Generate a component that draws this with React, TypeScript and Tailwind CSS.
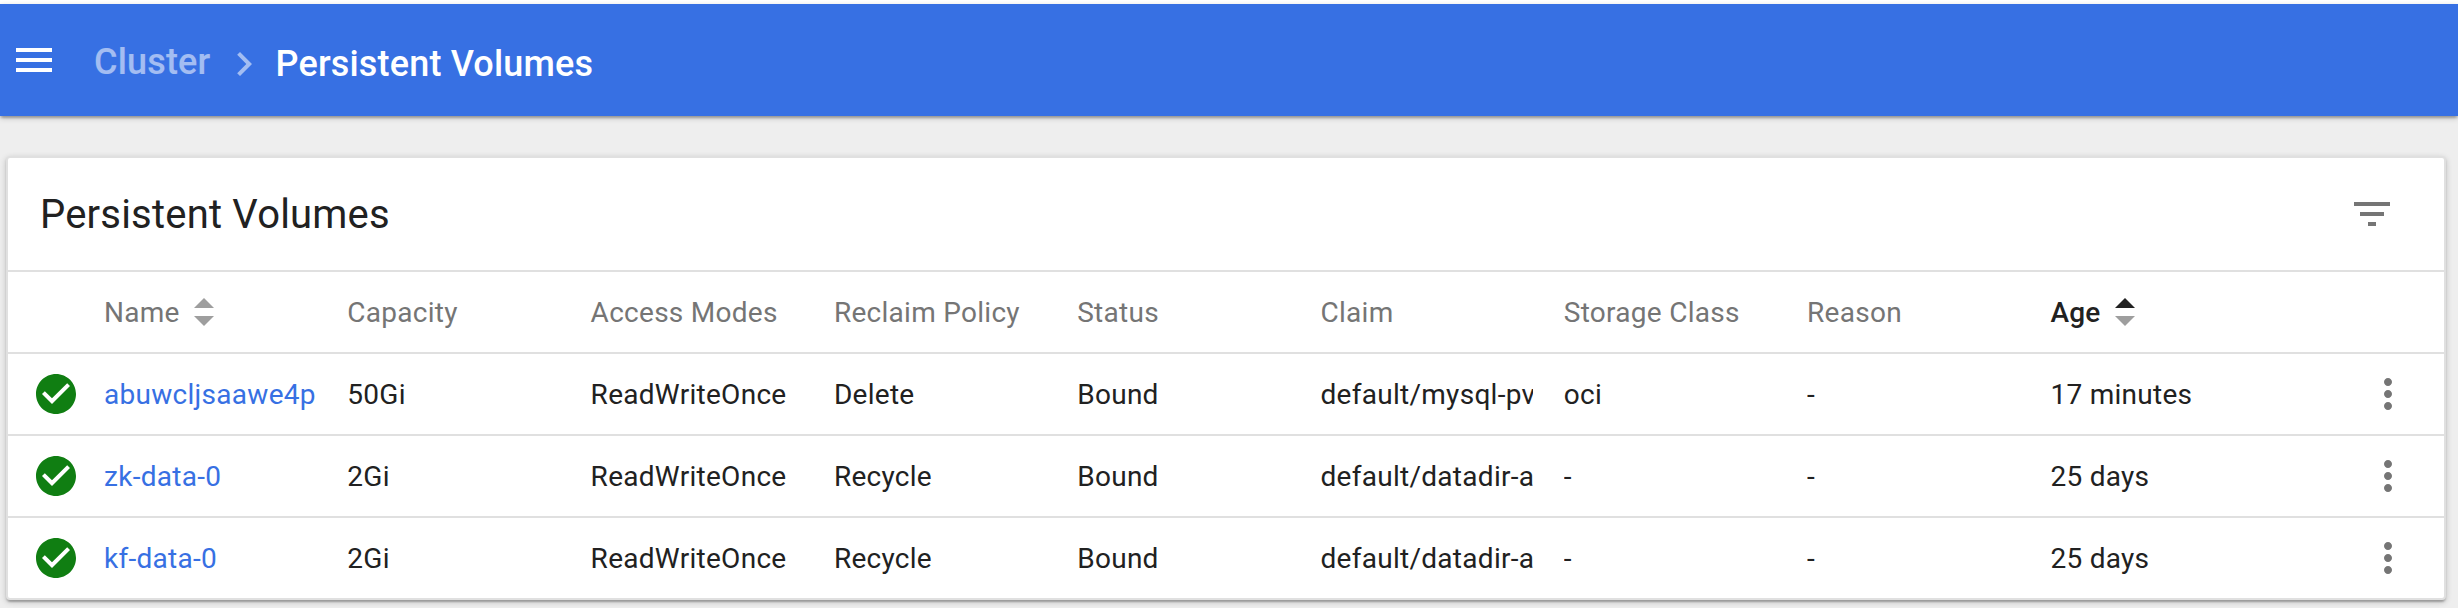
import React from "react";

const COLUMNS = [
  "Name",
  "Capacity",
  "Access Modes",
  "Reclaim Policy",
  "Status",
  "Claim",
  "Storage Class",
  "Reason",
  "Age",
];

const VOLUMES = [
  ["abuwcljsaawe4p", "50Gi", "ReadWriteOnce", "Delete", "Bound", "default/mysql-pv", "oci", "-", "17 minutes"],
  ["zk-data-0", "2Gi", "ReadWriteOnce", "Recycle", "Bound", "default/datadir-a", "-", "-", "25 days"],
  ["kf-data-0", "2Gi", "ReadWriteOnce", "Recycle", "Bound", "default/datadir-a", "-", "-", "25 days"],
];

function Icon({ d, className = "" }: { d: string; className?: string }) {
  return (
    <svg viewBox="0 0 24 24" className={`size-12 shrink-0 fill-current ${className}`}>
      <path d={d} />
    </svg>
  );
}

function SortArrows({ active = false }: { active?: boolean }) {
  return (
    <svg viewBox="0 0 20 28" className="ml-[14px] h-7 w-5 shrink-0">
      <path d="M0 10L10 0l10 10z" fill={active ? "#212121" : "#9e9e9e"} />
      <path d="M0 18l10 10 10-10z" fill="#9e9e9e" />
    </svg>
  );
}

function Toolbar() {
  return (
    <header className="relative flex h-28 items-center bg-[#3770e3] pl-[10px] text-[36px] leading-none font-medium tracking-[0.18px] text-white shadow-[0_2px_6px_rgba(0,0,0,0.2),0_2px_2px_rgba(0,0,0,0.14),0_4px_2px_-2px_rgba(0,0,0,0.12)]">
      <Icon d="M3 18h18v-2H3v2zm0-5h18v-2H3v2zm0-7v2h18V6H3z" />
      <span className="ml-9 pt-1 text-white/54">Cluster</span>
      <Icon className="ml-[9px] mt-[7px] text-white/54" d="M10 6L8.59 7.41 13.17 12l-4.58 4.59L10 18l6-6z" />
      <span className="ml-2 pt-2">Persistent Volumes</span>
    </header>
  );
}

function HeaderRow() {
  return (
    <div className="flex h-[82px] items-center border-t-2 border-[#e0e0e0] pl-24 text-[#757575]">
      {COLUMNS.map((label) => {
        const active = label === "Age";
        return (
          <div
            key={label}
            className={`flex w-[243.3px] shrink-0 items-center ${active ? "font-medium text-[#212121]" : ""}`}
          >
            <span className="pt-0.5">{label}</span>
            {(active || label === "Name") && <SortArrows active={active} />}
          </div>
        );
      })}
    </div>
  );
}

function VolumeRow({ cells }: { cells: string[] }) {
  return (
    <div className="flex h-[82px] items-center border-t-2 border-[#e0e0e0] pl-6 text-[#212121]">
      <Icon
        className="mr-6 text-[#107e12]"
        d="M12 2C6.48 2 2 6.48 2 12s4.48 10 10 10 10-4.48 10-10S17.52 2 12 2zm-2 15l-5-5 1.41-1.41L10 14.17l7.59-7.59L19 8l-9 9z"
      />
      {cells.map((cell, i) => (
        <div key={i} className="w-[243.3px] shrink-0 pt-0.5 pr-[31px]">
          <div className={`overflow-hidden whitespace-nowrap ${i === 0 ? "text-[#3770e3]" : ""}`}>{cell}</div>
        </div>
      ))}
      <Icon
        className="ml-auto mr-8 text-[#757575]"
        d="M12 8c1.1 0 2-.9 2-2s-.9-2-2-2-2 .9-2 2 .9 2 2 2zm0 2c-1.1 0-2 .9-2 2s.9 2 2 2 2-.9 2-2-.9-2-2-2zm0 6c-1.1 0-2 .9-2 2s.9 2 2 2 2-.9 2-2-.9-2-2-2z"
      />
    </div>
  );
}

export default function App() {
  return (
    <div className="h-[608px] w-[2458px] overflow-hidden bg-[#eeeeee] font-['Roboto',sans-serif] text-[28px] leading-9 tracking-[0.28px]">
      <div className="h-1 bg-white" />
      <Toolbar />
      <main className="mt-10 ml-1.5 w-[2440px] rounded-[4px] border-2 border-[#e0e0e0] bg-white shadow-[0_2px_6px_rgba(0,0,0,0.2),0_2px_2px_rgba(0,0,0,0.14),0_4px_2px_-2px_rgba(0,0,0,0.12)]">
        <div className="flex h-28 items-center justify-between pr-12 pl-8">
          <h1 className="pt-0.5 text-[40px] leading-none tracking-[0.2px] text-[#212121]">Persistent Volumes</h1>
          <Icon className="text-[#757575]" d="M10 18h4v-2h-4v2zM3 6v2h18V6H3zm3 7h12v-2H6v2z" />
        </div>
        <HeaderRow />
        {VOLUMES.map((cells) => (
          <VolumeRow key={cells[0]} cells={cells} />
        ))}
      </main>
    </div>
  );
}
